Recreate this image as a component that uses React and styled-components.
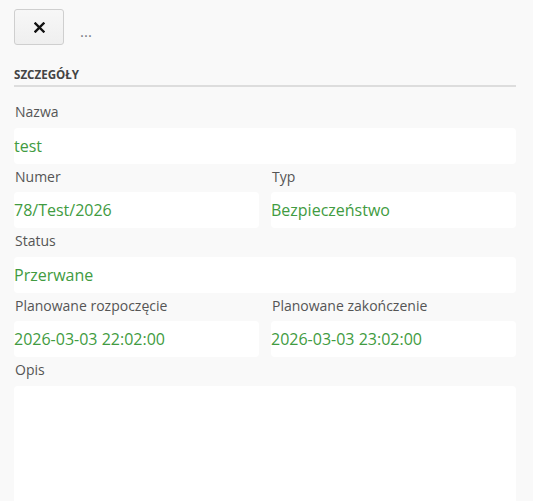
import React from 'react';
import styled, { createGlobalStyle } from 'styled-components';

const GlobalStyle = createGlobalStyle`
  html, body {
    margin: 0;
    padding: 0;
    background: #f9f9f9;
    font-family: "Open Sans", "Liberation Sans", sans-serif;
    overflow: hidden;
  }
`;

const Page = styled.div`
  padding: 9px 17px 0 14px;
`;

const Toolbar = styled.div`
  display: flex;
  align-items: center;
  gap: 16px;
  height: 36px;
`;

const CloseButton = styled.button`
  width: 50px;
  height: 36px;
  box-sizing: border-box;
  border: 1px solid #cfcfcf;
  border-radius: 3px;
  background: linear-gradient(#f7f7f7, #efefef);
  display: flex;
  align-items: center;
  justify-content: center;
  padding: 0;
  color: #111;
`;

const More = styled.span`
  font-size: 15px;
  color: #7a7d85;
  margin-top: 8px;
`;

const SectionTitle = styled.h3`
  margin: 22px 0 0;
  font-size: 11.6px;
  line-height: 15px;
  font-weight: 700;
  color: #444;
  text-transform: uppercase;
  padding-bottom: 3px;
  border-bottom: 2px solid #dddddd;
`;

const Fields = styled.div`
  padding-top: 15px;
  display: flex;
  flex-direction: column;
  gap: 3px;
`;

const Row = styled.div`
  display: grid;
  grid-template-columns: ${p => (p.$cols === 2 ? '1fr 1fr' : '1fr')};
  column-gap: 12px;
`;

const Field = styled.div`
  display: flex;
  flex-direction: column;
`;

const Label = styled.label`
  font-size: 14px;
  line-height: 20px;
  color: #555;
  padding-left: 1px;
  margin-bottom: 5.5px;
`;

const Value = styled.div`
  background: #fff;
  border-radius: 4px;
  height: ${p => (p.$tall ? '160px' : '36px')};
  line-height: 36px;
  font-size: 16px;
  color: #419b41;
  white-space: nowrap;
  overflow: hidden;
`;

function XIcon() {
  return (
    <svg width="11" height="11" viewBox="0 0 11 11">
      <path d="M1.5 1.5 L9.5 9.5 M9.5 1.5 L1.5 9.5" stroke="#111" strokeWidth="2.4" strokeLinecap="square" />
    </svg>
  );
}

function App() {
  return (
    <Page>
      <GlobalStyle />
      <Toolbar>
        <CloseButton><XIcon /></CloseButton>
        <More>...</More>
      </Toolbar>
      <SectionTitle>Szczegóły</SectionTitle>
      <Fields>
        <Row>
          <Field>
            <Label>Nazwa</Label>
            <Value>test</Value>
          </Field>
        </Row>
        <Row $cols={2}>
          <Field>
            <Label>Numer</Label>
            <Value>78/Test/2026</Value>
          </Field>
          <Field>
            <Label>Typ</Label>
            <Value>Bezpieczeństwo</Value>
          </Field>
        </Row>
        <Row>
          <Field>
            <Label>Status</Label>
            <Value>Przerwane</Value>
          </Field>
        </Row>
        <Row $cols={2}>
          <Field>
            <Label>Planowane rozpoczęcie</Label>
            <Value>2026-03-03 22:02:00</Value>
          </Field>
          <Field>
            <Label>Planowane zakończenie</Label>
            <Value>2026-03-03 23:02:00</Value>
          </Field>
        </Row>
        <Row>
          <Field>
            <Label>Opis</Label>
            <Value $tall />
          </Field>
        </Row>
      </Fields>
    </Page>
  );
}

export default App;
